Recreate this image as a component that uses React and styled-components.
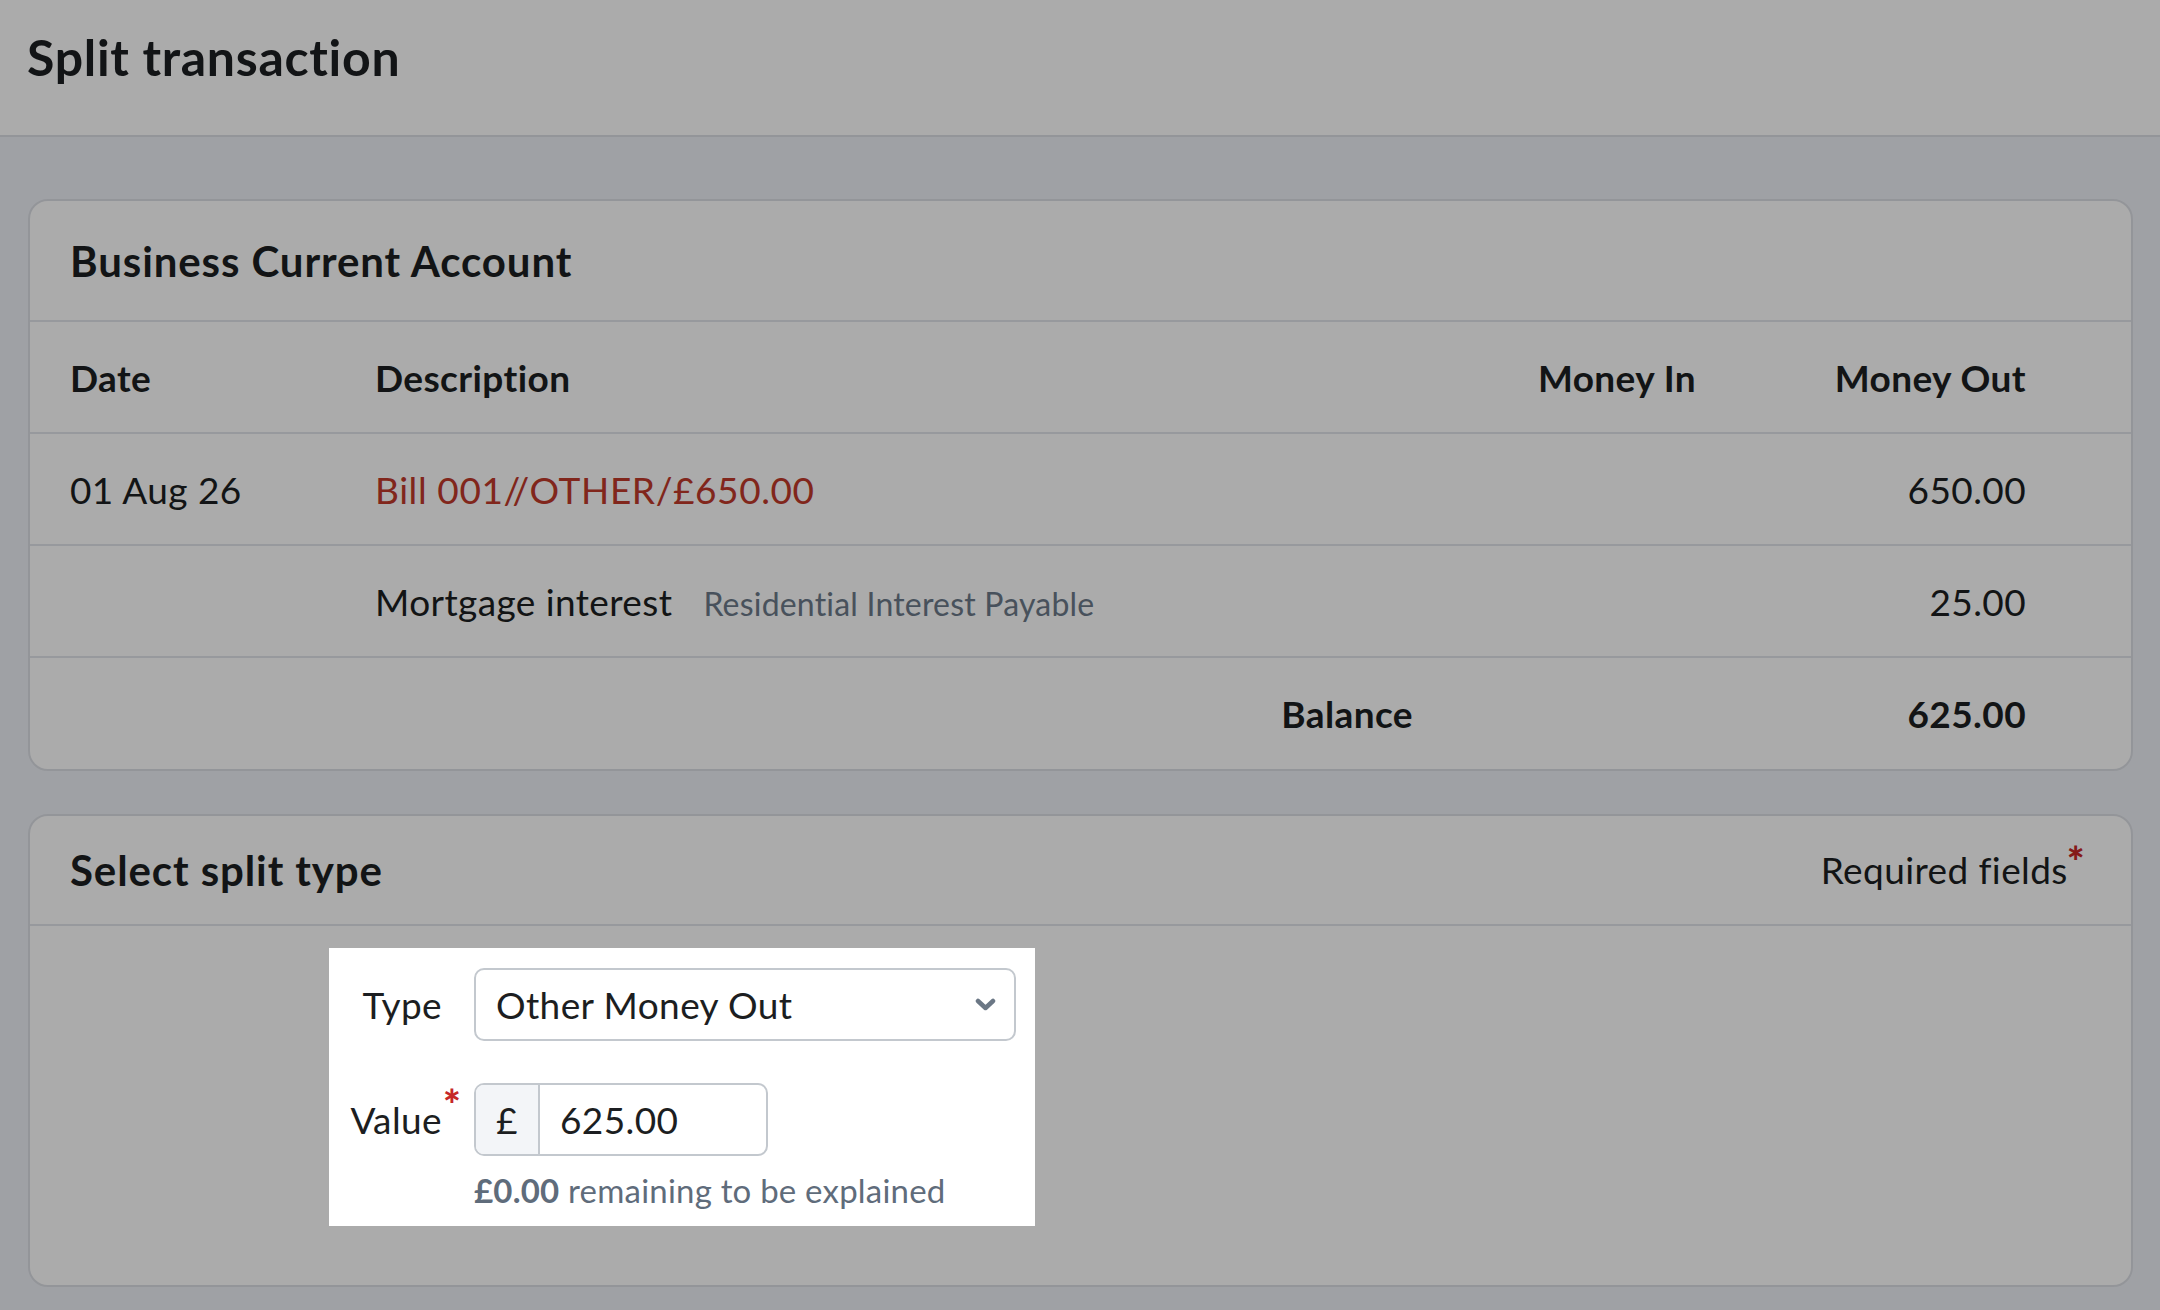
import React from 'react';
import styled, { createGlobalStyle } from 'styled-components';

const GlobalStyle = createGlobalStyle`
  html, body {
    margin: 0;
    background: #eef1f7;
  }
  body {
    font-family: Lato, "Noto Sans", sans-serif;
    color: #1c1e21;
    letter-spacing: 0.4px;
  }
  * {
    box-sizing: border-box;
  }
`;

const PageHeader = styled.header`
  height: 137px;
  padding: 27px 27px 0;
  background: #fff;
  border-bottom: 2px solid #dcdfe5;
`;

const PageTitle = styled.h1`
  margin: 0;
  font-size: 50px;
  line-height: 60px;
  font-weight: 700;
  letter-spacing: 0.7px;
`;

const Main = styled.main`
  display: flex;
  flex-direction: column;
  gap: 43px;
  padding: 62px 27px 23px 28px;
`;

const Card = styled.section`
  background: #fff;
  border: 2px solid #dcdfe5;
  border-radius: 20px;
`;

const CardHeader = styled.div`
  display: flex;
  align-items: center;
  justify-content: space-between;
  height: ${(p) => p.$height}px;
  padding: 0 46px 0 40px;
  border-bottom: 2px solid #e1e4ea;
`;

const CardTitle = styled.h2`
  margin: 0;
  font-size: 42px;
  line-height: 50px;
  font-weight: 700;
  letter-spacing: 0.9px;
`;

const Row = styled.div`
  display: grid;
  grid-template-columns: 305px 1fr 283px 330px;
  align-items: center;
  height: 112px;
  padding: 0 105px 0 40px;
  border-bottom: 2px solid #e1e4ea;
  font-size: 37px;
  font-weight: ${(p) => (p.$bold ? 700 : 400)};

  &:last-child {
    height: 111px;
    border-bottom: none;
  }
`;

const Cell = styled.div`
  text-align: ${(p) => p.$align || 'left'};
  white-space: nowrap;
`;

const Link = styled.a`
  color: #c0392b;
  text-decoration: none;
  letter-spacing: 0.6px;
`;

const Muted = styled.span`
  margin-left: 31px;
  font-size: 32px;
  color: #6c7a89;
  letter-spacing: 0.2px;
`;

const Required = styled.span`
  font-size: 37px;
  line-height: 50px;
  color: #1c1e21;
`;

const Star = styled.span`
  position: relative;
  top: -7px;
  margin-left: -1px;
  color: #c62828;
  font-weight: 900;
  font-size: 42px;
  line-height: 0;
`;

const LabelStar = styled(Star)`
  position: absolute;
  left: calc(100% + 1px);
  top: 0;
  margin-left: 0;
  line-height: 1;
`;

const CardBody = styled.div`
  padding: 22px 0 59px 299px;
`;

const Spotlight = styled.div`
  position: relative;
  z-index: 1;
  width: fit-content;
  display: grid;
  grid-template-columns: 90px 542px;
  column-gap: 32px;
  row-gap: 42px;
  padding: 20px 19px 16px 23px;
  background: #fff;
  box-shadow: 0 0 0 9999px rgba(0, 0, 0, 0.33);
`;

const Label = styled.label`
  position: relative;
  align-self: start;
  height: 73px;
  display: flex;
  align-items: center;
  justify-content: flex-end;
  font-size: 37px;
`;

const Select = styled.div`
  height: 73px;
  display: flex;
  align-items: center;
  justify-content: space-between;
  padding: 0 18px 0 20px;
  border: 2px solid #c3c8ce;
  border-radius: 10px;
  font-size: 37px;
`;

const FieldStack = styled.div`
  display: flex;
  flex-direction: column;
`;

const InputGroup = styled.div`
  width: 294px;
  height: 73px;
  display: flex;
  border: 2px solid #c3c8ce;
  border-radius: 10px;
  overflow: hidden;
  font-size: 37px;
`;

const Prefix = styled.span`
  width: 64px;
  display: flex;
  align-items: center;
  justify-content: center;
  background: #f3f5f8;
  border-right: 2px solid #c3c8ce;
`;

const Value = styled.span`
  display: flex;
  align-items: center;
  padding-left: 20px;
`;

const Hint = styled.p`
  margin: 14px 0 0;
  font-size: 33px;
  line-height: 40px;
  color: #5f6c7b;
  letter-spacing: 0.2px;

  strong {
    font-weight: 700;
  }
`;

const Chevron = () => (
  <svg width="21" height="13" viewBox="0 0 21 13" fill="none">
    <path d="M3 3l7.5 7 7.5-7" stroke="#6b7785" strokeWidth="4.5" strokeLinecap="round" strokeLinejoin="round" />
  </svg>
);

export default function App() {
  return (
    <>
      <GlobalStyle />
      <PageHeader>
        <PageTitle>Split transaction</PageTitle>
      </PageHeader>
      <Main>
        <Card>
          <CardHeader $height={121}>
            <CardTitle>Business Current Account</CardTitle>
          </CardHeader>
          <Row $bold>
            <Cell>Date</Cell>
            <Cell>Description</Cell>
            <Cell $align="right">Money In</Cell>
            <Cell $align="right">Money Out</Cell>
          </Row>
          <Row>
            <Cell>01 Aug 26</Cell>
            <Cell>
              <Link href="#">Bill 001//OTHER/£650.00</Link>
            </Cell>
            <Cell />
            <Cell $align="right">650.00</Cell>
          </Row>
          <Row>
            <Cell />
            <Cell>
              Mortgage interest<Muted>Residential Interest Payable</Muted>
            </Cell>
            <Cell />
            <Cell $align="right">25.00</Cell>
          </Row>
          <Row $bold>
            <Cell />
            <Cell $align="right">Balance</Cell>
            <Cell />
            <Cell $align="right">625.00</Cell>
          </Row>
        </Card>

        <Card>
          <CardHeader $height={110}>
            <CardTitle>Select split type</CardTitle>
            <Required>
              Required fields<Star>*</Star>
            </Required>
          </CardHeader>
          <CardBody>
            <Spotlight>
              <Label>Type</Label>
              <Select>
                <span>Other Money Out</span>
                <Chevron />
              </Select>
              <Label>
                Value<LabelStar>*</LabelStar>
              </Label>
              <FieldStack>
                <InputGroup>
                  <Prefix>£</Prefix>
                  <Value>625.00</Value>
                </InputGroup>
                <Hint>
                  <strong>£0.00</strong> remaining to be explained
                </Hint>
              </FieldStack>
            </Spotlight>
          </CardBody>
        </Card>
      </Main>
    </>
  );
}
